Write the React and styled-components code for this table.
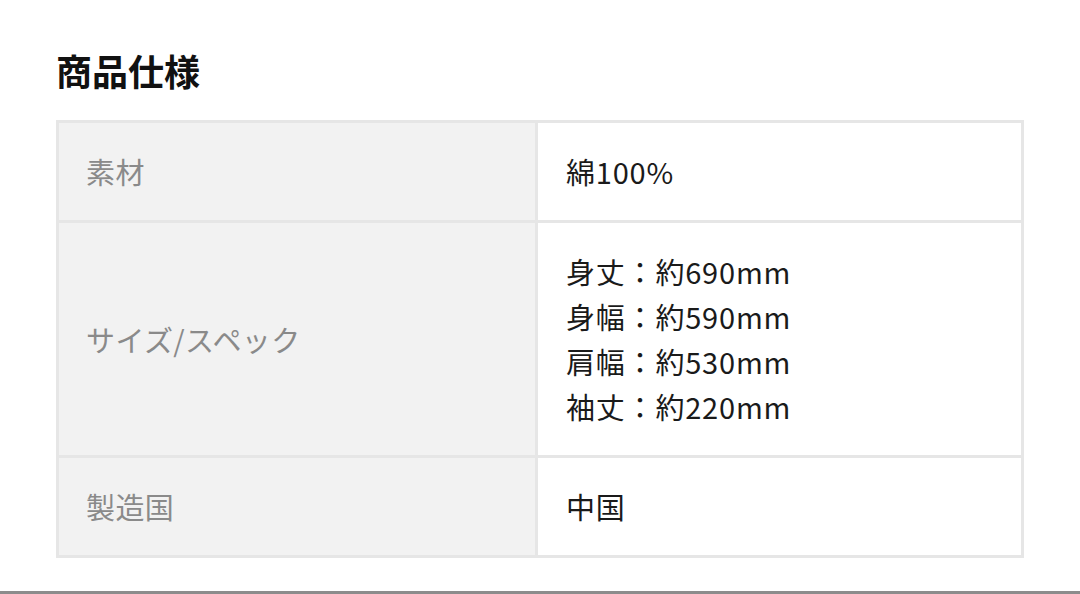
import React from 'react';
import styled, { createGlobalStyle } from 'styled-components';

const GlobalStyle = createGlobalStyle`
  html, body {
    margin: 0;
    padding: 0;
    background: #ffffff;
  }
  body {
    font-family: "Noto Sans CJK JP", "Noto Sans", sans-serif;
  }
`;

const Page = styled.div`
  width: 1080px;
  height: 594px;
  display: flex;
  flex-direction: column;
  box-sizing: border-box;
`;

const Content = styled.div`
  flex: 1;
  padding: 45px 56px 0 56px;
`;

const Title = styled.h2`
  margin: 0 0 24px 0;
  font-size: 36px;
  line-height: 51px;
  font-weight: 700;
  color: #111111;
`;

const SpecTable = styled.div`
  display: grid;
  grid-template-columns: 476px 1fr;
  gap: 3px;
  padding: 3px;
  background: #e6e6e6;
  width: 968px;
  box-sizing: border-box;
`;

const Cell = styled.div`
  display: flex;
  flex-direction: column;
  justify-content: center;
  padding: 26px 26px 26px ${(p) => (p.label ? '27px' : '28px')};
  font-size: 29px;
  line-height: 45px;
  letter-spacing: ${(p) => (p.label ? '0.4px' : '0.8px')};
  background: ${(p) => (p.label ? '#f2f2f2' : '#ffffff')};
  color: ${(p) => (p.label ? '#8a8a8a' : '#1a1a1a')};
`;

const Footer = styled.div`
  height: 3px;
  background: #8c8c8c;
`;

const specs = [
  { label: '素材', values: ['綿100%'] },
  {
    label: 'サイズ/スペック',
    values: ['身丈：約690mm', '身幅：約590mm', '肩幅：約530mm', '袖丈：約220mm']
  },
  { label: '製造国', values: ['中国'] }
];

const App = () => (
  <Page>
    <GlobalStyle />
    <Content>
      <Title>商品仕様</Title>
      <SpecTable>
        {specs.map((row) => (
          <React.Fragment key={row.label}>
            <Cell label>{row.label}</Cell>
            <Cell>
              {row.values.map((v) => (
                <div key={v}>{v}</div>
              ))}
            </Cell>
          </React.Fragment>
        ))}
      </SpecTable>
    </Content>
    <Footer />
  </Page>
);

export default App;
